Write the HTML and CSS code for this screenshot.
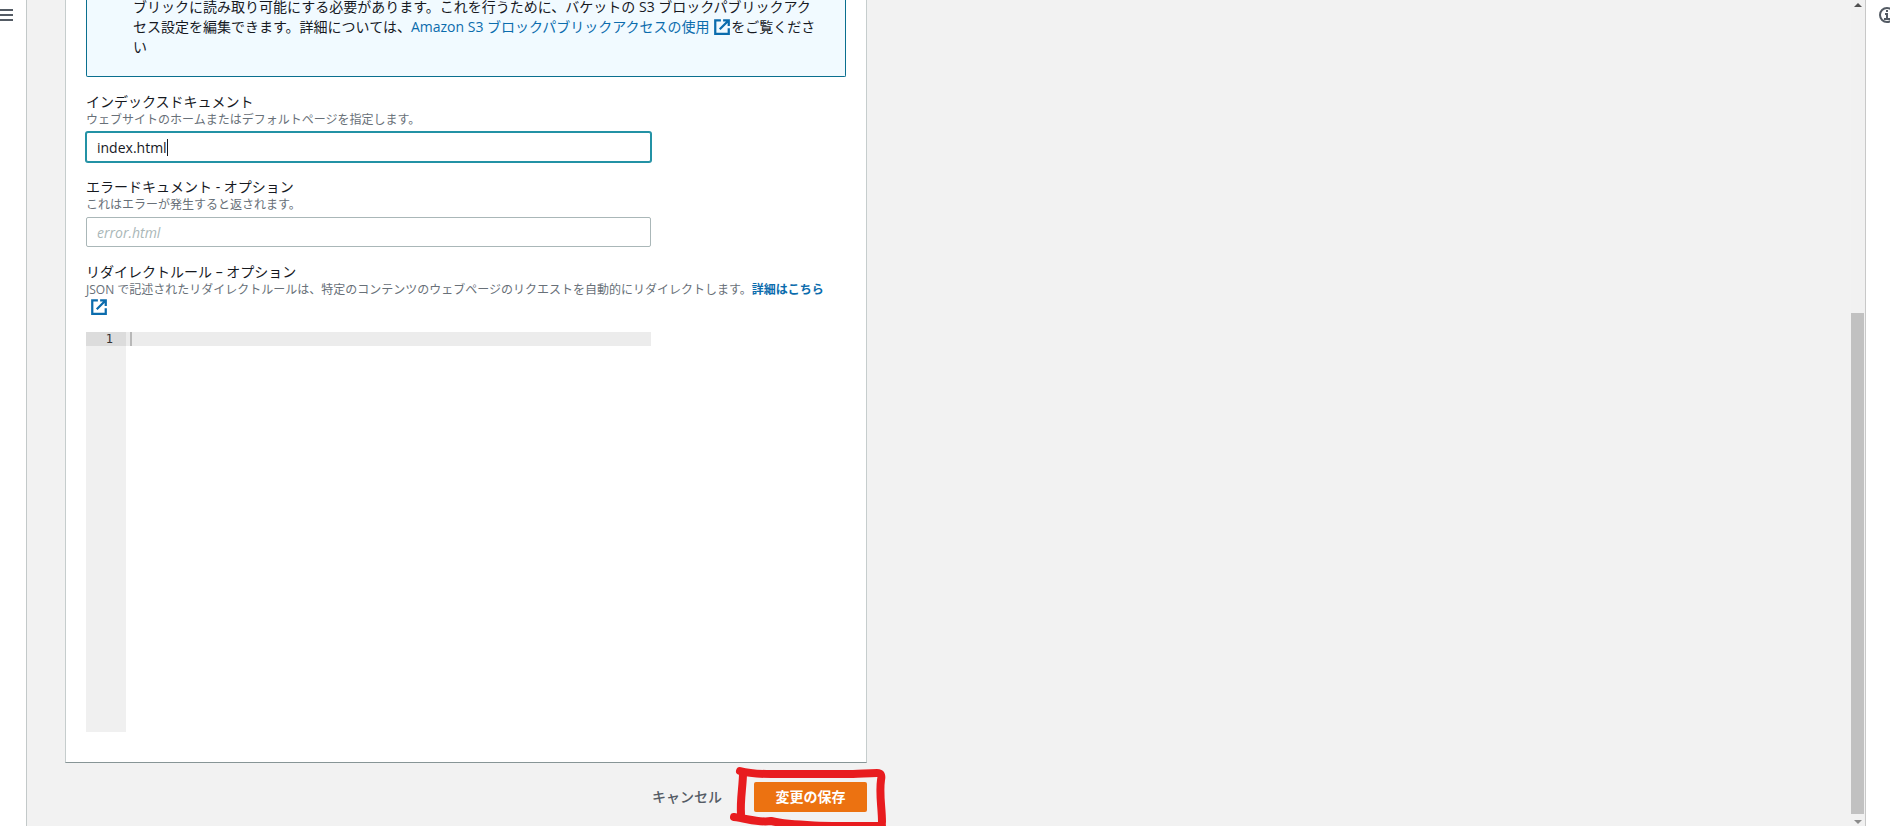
FILE: index.html
```
<!DOCTYPE html>
<html lang="ja">
<head>
<meta charset="utf-8">
<title>静的ウェブサイトホスティングを編集</title>
<link rel="stylesheet" href="styles.css">
</head>
<body>
<div class="app">
  <nav class="rail rail-left">
    <button class="rail-button" type="button" aria-label="ナビゲーションを開く">
      <svg width="16" height="16" viewBox="0 0 16 16" fill="none" stroke="#545b64" stroke-width="2"><path d="M0 3h15M0 8h15M0 13h15"/></svg>
    </button>
  </nav>

  <main class="content">
    <form class="form">
      <section class="card">
        <div class="alert">
          <p class="alert-text">ブリックに読み取り可能にする必要があります。これを行うために、バケットの S3 ブロックパブリックアクセス設定を編集できます。詳細については、<a class="link" href="#">Amazon S3 ブロックパブリックアクセスの使用 <svg class="external" viewBox="0 0 16 16" fill="none" stroke="currentColor" stroke-width="2"><path d="M9 2h5v5M6 10l8-8M14 9v5H2V2h5"/></svg></a>をご覧ください</p>
        </div>

        <div class="field">
          <label class="label" for="index-doc">インデックスドキュメント</label>
          <p class="hint">ウェブサイトのホームまたはデフォルトページを指定します。</p>
          <div class="input-wrap">
            <input class="input focused" id="index-doc" type="text" value="index.html">
            <span class="caret" aria-hidden="true"></span>
          </div>
        </div>

        <div class="field">
          <label class="label" for="error-doc">エラードキュメント - オプション</label>
          <p class="hint">これはエラーが発生すると返されます。</p>
          <div class="input-wrap">
            <input class="input" id="error-doc" type="text" placeholder="error.html">
          </div>
        </div>

        <div class="field">
          <label class="label" for="rules">リダイレクトルール – オプション</label>
          <p class="hint">JSON で記述されたリダイレクトルールは、特定のコンテンツのウェブページのリクエストを自動的にリダイレクトします。<a class="link strong" href="#">詳細はこちら <svg class="external hint-icon" viewBox="0 0 16 16" fill="none" stroke="currentColor" stroke-width="2"><path d="M9 2h5v5M6 10l8-8M14 9v5H2V2h5"/></svg></a></p>
          <div class="editor">
            <div class="gutter"><div class="line-number">1</div></div>
            <textarea class="code" id="rules" spellcheck="false"></textarea>
          </div>
        </div>
      </section>

      <div class="actions">
        <button class="cancel" type="button">キャンセル</button>
        <div class="save-wrap">
          <button class="save" type="button">変更の保存</button>
          <svg class="marker" width="165" height="68" viewBox="0 0 165 68" fill="none" stroke="#e81c1f" stroke-width="8" stroke-linecap="round" stroke-linejoin="round" aria-hidden="true"><path d="M15 9C22 11 32 12 46 12H128C136 12 142 11 152 11C156 11 157 13 156 18C154 32 157 46 157 60"/><path d="M18 11C18 23 15 38 16 52"/><path d="M9 55C24 57 34 61 46 59C66 64 104 64 157 64"/></svg>
        </div>
      </div>
    </form>
  </main>

  <div class="scrollbar" aria-hidden="true">
    <span class="arrow up"></span>
    <span class="thumb"></span>
    <span class="arrow down"></span>
  </div>

  <aside class="rail rail-right">
    <button class="rail-button" type="button" aria-label="情報">
      <svg width="16" height="16" viewBox="0 0 16 16" fill="none" stroke="#545b64" stroke-width="2"><circle cx="8" cy="8" r="7"/><path d="M6 7h2v5M5 12h6M7 4h2"/></svg>
    </button>
  </aside>
</div>
</body>
</html>
```
FILE: styles.css
```
* {
  box-sizing: border-box;
}

body {
  margin: 0;
  background: #f2f2f2;
  color: #16191f;
  font: 14px/20px "Open Sans", "Noto Sans CJK JP", sans-serif;
}

button,
input,
textarea {
  font: inherit;
}

p {
  margin: 0;
}

.app {
  display: flex;
  height: 100vh;
  overflow: hidden;
}

.rail {
  flex: none;
  display: flex;
  align-items: flex-start;
  background: #fff;
  overflow: hidden;
}

.rail-left {
  width: 27px;
  border-right: 1px solid #c3c9c9;
}

.rail-right {
  width: 25px;
  padding-left: 13px;
  border-left: 1px solid #c8c8c8;
}

.rail-button {
  flex: none;
  display: flex;
  margin: 7px 0 0;
  padding: 0;
  border: 0;
  background: none;
}

.rail-left .rail-button {
  margin-left: -2px;
}

.content {
  flex: 1;
  min-width: 0;
  padding: 0 38px;
  overflow: hidden;
}

.form {
  max-width: 802px;
}

.card {
  padding: 0 20px 30px;
  background: #fff;
  border: 1px solid #c6cdcd;
  border-top: 0;
  border-bottom-color: #879596;
}

.alert {
  margin-bottom: 14px;
  padding: 0 24px 19px 46px;
  background: #f1faff;
  border: 1px solid #0a6f8f;
  border-top: 0;
  border-radius: 0 0 2px 2px;
}

.alert-text {
  margin-top: -3px;
}

.link {
  color: #0b6cad;
  text-decoration: none;
}

.strong {
  font-weight: 700;
}

.external {
  width: 18px;
  height: 18px;
  vertical-align: -4px;
}

.field {
  margin-bottom: 14px;
}

.label {
  display: block;
  line-height: 21px;
}

.hint {
  color: #687078;
  font-size: 12px;
  line-height: 16px;
}

.hint-icon {
  margin-left: 4px;
}

.input-wrap {
  position: relative;
  width: calc(75% - 5px);
  margin-top: 4px;
}

.input {
  display: block;
  width: 100%;
  height: 30px;
  padding: 0 10px;
  color: #16191f;
  background: #fff;
  border: 1px solid #aab7b8;
  border-radius: 2px;
  outline: 0;
}

.input::placeholder {
  color: #aab7b8;
  font-style: italic;
  opacity: 1;
}

.focused {
  border-color: #2392a5;
  box-shadow: 0 0 0 1px #2392a5;
}

.caret {
  position: absolute;
  top: 7px;
  left: 81px;
  width: 1px;
  height: 17px;
  background: #16191f;
}

.editor {
  display: flex;
  width: calc(75% - 5px);
  height: 400px;
  margin-top: 16px;
}

.gutter {
  flex: none;
  width: 40px;
  background: #f0f0f0;
}

.line-number {
  padding-right: 13px;
  background: #dcdcdc;
  color: #333;
  font: 12px/14px "DejaVu Sans Mono", monospace;
  text-align: right;
}

.code {
  flex: 1;
  min-width: 0;
  padding: 0 4px;
  border: 0;
  outline: 0;
  resize: none;
  font: 12px/14px "DejaVu Sans Mono", monospace;
  background:
    linear-gradient(#b8b8b8, #b8b8b8) 4px 0 / 2px 14px no-repeat,
    linear-gradient(#ececec, #ececec) 0 0 / 100% 14px no-repeat,
    #fff;
}

.card .field:last-child {
  margin-bottom: 0;
}

.actions {
  display: flex;
  justify-content: flex-end;
  gap: 12px;
  padding-top: 19px;
}

.cancel,
.save {
  height: 30px;
  padding: 0 20px;
  border: 0;
  border-radius: 2px;
  white-space: nowrap;
}

.cancel {
  background: none;
  color: #545b64;
  font-weight: 500;
}

.save-wrap {
  position: relative;
}

.save {
  min-width: 113px;
  background: #ec7211;
  color: #fff;
  font-weight: 700;
}

.marker {
  position: absolute;
  top: -20px;
  left: -29px;
  pointer-events: none;
}

.scrollbar {
  flex: none;
  display: flex;
  flex-direction: column;
  align-items: center;
  width: 14px;
  padding: 3px 1px 2px 0;
  background: #f1f1f1;
}

.arrow {
  border: 4px solid transparent;
}

.up {
  margin-top: -4px;
  margin-bottom: auto;
  border-bottom-color: #505050;
}

.thumb {
  width: 100%;
  height: 61%;
  margin-bottom: 6px;
  background: #c1c1c1;
}

.down {
  margin-bottom: -4px;
  border-top-color: #8c8c8c;
}
```
